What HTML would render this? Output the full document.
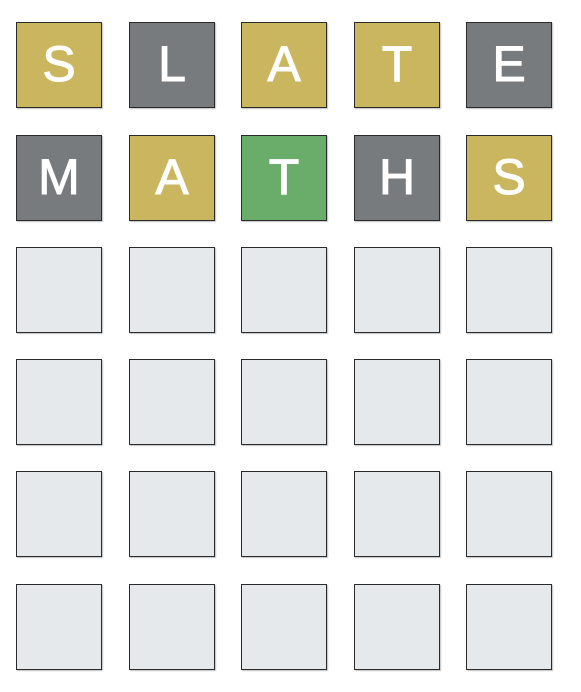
<!DOCTYPE html>
<html><head><style>
html,body{margin:0;padding:0;background:#fff;width:581px;height:692px;overflow:hidden}
.t{position:absolute;width:84px;height:84px;border:1px solid #2a2a2a;box-shadow:1px 1px 1px rgba(0,0,0,.25);display:flex;align-items:center;justify-content:center;color:#fff;font-family:"Liberation Sans",sans-serif;font-size:50px;line-height:1;background:#e6e9ec;-webkit-text-stroke:1px #fff;padding-bottom:2px;box-sizing:content-box;height:82px}
.y{background:#c9b65f}.g{background:#787b7e}.gr{background:#6aac69}
</style></head><body>
<div class="t y" style="left:16px;top:22px">S</div>
<div class="t g" style="left:129px;top:22px">L</div>
<div class="t y" style="left:241px;top:22px">A</div>
<div class="t y" style="left:354px;top:22px">T</div>
<div class="t g" style="left:466px;top:22px">E</div>
<div class="t g" style="left:16px;top:135px">M</div>
<div class="t y" style="left:129px;top:135px">A</div>
<div class="t gr" style="left:241px;top:135px">T</div>
<div class="t g" style="left:354px;top:135px">H</div>
<div class="t y" style="left:466px;top:135px">S</div>
<div class="t" style="left:16px;top:247px"></div><div class="t" style="left:129px;top:247px"></div><div class="t" style="left:241px;top:247px"></div><div class="t" style="left:354px;top:247px"></div><div class="t" style="left:466px;top:247px"></div>
<div class="t" style="left:16px;top:359px"></div><div class="t" style="left:129px;top:359px"></div><div class="t" style="left:241px;top:359px"></div><div class="t" style="left:354px;top:359px"></div><div class="t" style="left:466px;top:359px"></div>
<div class="t" style="left:16px;top:471px"></div><div class="t" style="left:129px;top:471px"></div><div class="t" style="left:241px;top:471px"></div><div class="t" style="left:354px;top:471px"></div><div class="t" style="left:466px;top:471px"></div>
<div class="t" style="left:16px;top:584px"></div><div class="t" style="left:129px;top:584px"></div><div class="t" style="left:241px;top:584px"></div><div class="t" style="left:354px;top:584px"></div><div class="t" style="left:466px;top:584px"></div>
</body></html>
